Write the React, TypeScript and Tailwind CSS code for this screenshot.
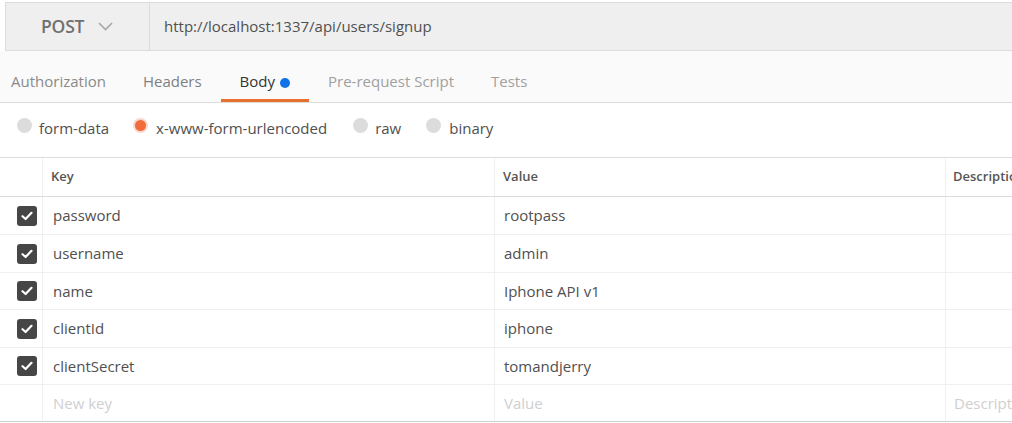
import React from "react";

const rows = [
  { k: "password", v: "rootpass", h: "h-[38px]" },
  { k: "username", v: "admin", h: "h-[38px]" },
  { k: "name", v: "Iphone API v1", h: "h-[37px]" },
  { k: "clientId", v: "iphone", h: "h-[38px]" },
  { k: "clientSecret", v: "tomandjerry", h: "h-[37px]" },
];

function Check() {
  return (
    <div className="w-[20px] h-[20px] rounded-[3px] bg-[#464646] flex items-center justify-center">
      <svg width="12" height="10" viewBox="0 0 12 10">
        <path d="M1.5 5.2 L4.6 8 L10.5 1.8" fill="none" stroke="#fff" strokeWidth="2.2" strokeLinecap="round" strokeLinejoin="round" />
      </svg>
    </div>
  );
}

function Radio({ on }: { on?: boolean }) {
  return on ? (
    <div className="w-[15px] h-[15px] rounded-full bg-[#f6d9cc] flex items-center justify-center">
      <div className="w-[11px] h-[11px] rounded-full bg-[#f26b3a]" />
    </div>
  ) : (
    <div className="w-[15px] h-[15px] rounded-full bg-[#dcdcdc]" />
  );
}

export default function App() {
  return (
    <div className="w-[1012px] h-[423px] overflow-hidden bg-white text-[#505050]" style={{ fontFamily: '"Open Sans", "Noto Sans", sans-serif' }}>
      {/* URL bar */}
      <div className="pl-[5px] pt-[2px] bg-white">
        <div className="flex h-[49px] border border-[#dcdcdc] border-r-0 bg-[#efefef]">
          <div className="w-[144px] flex items-center pl-[35px] border-r border-[#dcdcdc] shrink-0">
            <span className="text-[17.5px] font-semibold text-[#707070] tracking-[-0.2px]">POST</span>
            <svg className="ml-[14px]" width="15" height="9" viewBox="0 0 15 9">
              <path d="M1 1 L7.5 7.5 L14 1" fill="none" stroke="#a8a8a8" strokeWidth="1.6" />
            </svg>
          </div>
          <div className="flex items-center pl-[14px] text-[15px] text-[#505050]">
            http://localhost:1337/api/users/signup
          </div>
        </div>
      </div>
      {/* Tabs */}
      <div className="h-[52px] bg-[#fafafa] border-b border-[#dcdcdc] flex">
        <div className="flex ml-[-8px] text-[15px]">
          <div className="px-[19px] pt-[10px] flex items-center text-[#8a8a8a]">Authorization</div>
          <div className="px-[18px] pt-[10px] flex items-center text-[#808080]">Headers</div>
          <div className="pl-[20px] pr-[19px] pt-[10px] flex items-center text-[#333] relative">
            Body
            <span className="ml-[5px] w-[10px] h-[10px] rounded-full bg-[#0f72e6] inline-block mt-[2px]" />
            <div className="absolute left-[1px] right-0 bottom-0 h-[3px] bg-[#e8702d]" />
          </div>
          <div className="px-[19px] pt-[10px] flex items-center text-[#a0a0a0]">Pre-request Script</div>
          <div className="px-[18px] pt-[10px] flex items-center text-[#a0a0a0]">Tests</div>
        </div>
      </div>
      {/* Radios */}
      <div className="h-[55px] flex items-center pl-[17px] pb-[4px] text-[15px] text-[#505050] border-b border-[#dcdcdc]">
        <div className="flex items-center mt-[-5px]"><Radio /></div>
        <span className="ml-[7px]">form-data</span>
        <div className="flex items-center ml-[24px] mt-[-5px]"><Radio on /></div>
        <span className="ml-[8px]">x-www-form-urlencoded</span>
        <div className="flex items-center ml-[26px] mt-[-5px]"><Radio /></div>
        <span className="ml-[7px]">raw</span>
        <div className="flex items-center ml-[25px] mt-[-5px]"><Radio /></div>
        <span className="ml-[8px]">binary</span>
      </div>
      {/* Table */}
      <div className="text-[15px]">
        <div className="flex h-[39px] border-b border-[#dcdcdc] text-[13px] font-semibold text-[#555]">
          <div className="w-[43px] border-r border-[#f0f0f0] shrink-0" />
          <div className="w-[452px] border-r border-[#f0f0f0] shrink-0 flex items-center pl-[8px]">Key</div>
          <div className="w-[451px] border-r border-[#f0f0f0] shrink-0 flex items-center pl-[8px]">Value</div>
          <div className="flex-1 flex items-center pl-[7px] whitespace-nowrap">Description</div>
        </div>
        {rows.map((r) => (
          <div key={r.k} className={`flex ${r.h} border-b border-[#efefef]`}>
            <div className="w-[43px] border-r border-[#f0f0f0] shrink-0 flex items-center pl-[17px]"><Check /></div>
            <div className="w-[452px] border-r border-[#f0f0f0] shrink-0 flex items-center pl-[10px]">{r.k}</div>
            <div className="w-[451px] border-r border-[#f0f0f0] shrink-0 flex items-center pl-[9px]">{r.v}</div>
            <div className="flex-1" />
          </div>
        ))}
        <div className="flex h-[37px] border-b border-[#d0d0d0] text-[#cfcfcf]">
          <div className="w-[43px] border-r border-[#f0f0f0] shrink-0" />
          <div className="w-[452px] border-r border-[#f0f0f0] shrink-0 flex items-center pl-[10px]">New key</div>
          <div className="w-[451px] border-r border-[#f0f0f0] shrink-0 flex items-center pl-[9px]">Value</div>
          <div className="flex-1 flex items-center pl-[8px] whitespace-nowrap">Description</div>
        </div>
      </div>
    </div>
  );
}
